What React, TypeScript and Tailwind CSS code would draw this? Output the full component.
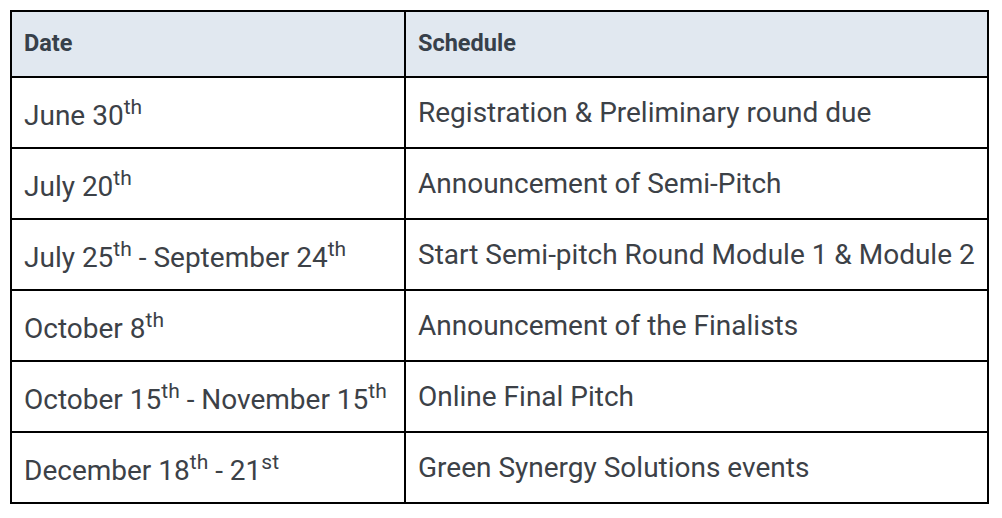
import React from 'react';

interface Row {
  date: React.ReactNode;
  schedule: string;
}

const Sup: React.FC<{ children: React.ReactNode }> = ({ children }) => (
  <sup className="text-[21px]">{children}</sup>
);

const rows: Row[] = [
  { date: <>June 30<Sup>th</Sup></>, schedule: 'Registration & Preliminary round due' },
  { date: <>July 20<Sup>th</Sup></>, schedule: 'Announcement of Semi-Pitch' },
  { date: <>July 25<Sup>th</Sup> - September 24<Sup>th</Sup></>, schedule: 'Start Semi-pitch Round Module 1 & Module 2' },
  { date: <>October 8<Sup>th</Sup></>, schedule: 'Announcement of the Finalists' },
  { date: <>October 15<Sup>th</Sup> - November 15<Sup>th</Sup></>, schedule: 'Online Final Pitch' },
  { date: <>December 18<Sup>th</Sup> - 21<Sup>st</Sup></>, schedule: 'Green Synergy Solutions events' },
];

const App: React.FC = () => {
  return (
    <div className="w-[1002px] h-[518px] bg-white pt-[10px] pl-[10px] font-['Roboto',sans-serif]">
      <table className="w-[979px] border-collapse table-fixed">
        <colgroup>
          <col className="w-[394px]" />
          <col />
        </colgroup>
        <thead>
          {/* Header */}
          <tr className="h-[66px] bg-[#e1e8f0]">
            <th className="border-2 border-black px-3 text-left text-[23.5px] font-bold text-[#37404a]">Date</th>
            <th className="border-2 border-black px-3 text-left text-[23.5px] font-bold text-[#37404a]">Schedule</th>
          </tr>
        </thead>
        <tbody>
          {rows.map((row, i) => (
            <tr key={i} className="h-[71px]">
              <td className="border-2 border-black px-3 pt-[6px] text-[28px] leading-9 text-[#3c4147] whitespace-nowrap">
                {row.date}
              </td>
              <td className="border-2 border-black px-3 text-[28px] leading-9 text-[#3c4147] whitespace-nowrap">
                {row.schedule}
              </td>
            </tr>
          ))}
        </tbody>
      </table>
    </div>
  );
};

export default App;
